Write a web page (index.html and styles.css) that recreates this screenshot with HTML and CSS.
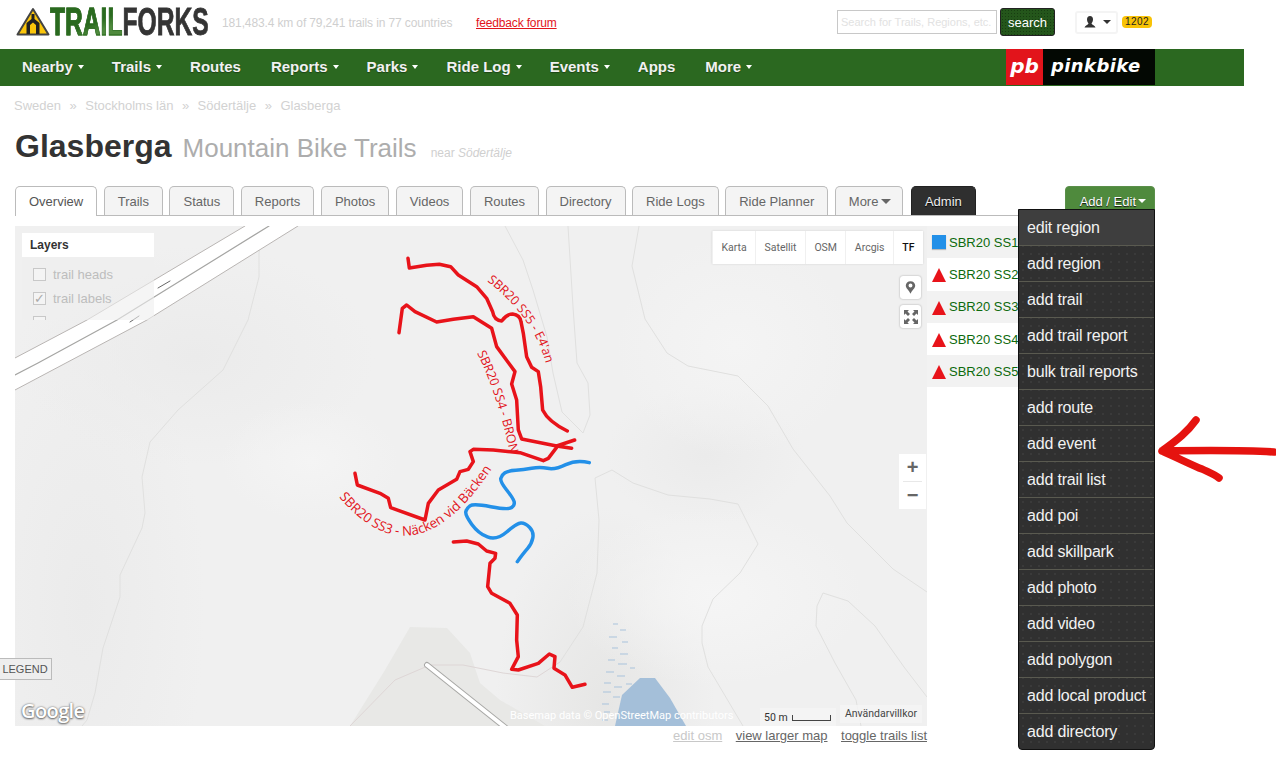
FILE: index.html
```html
<!DOCTYPE html>
<html lang="en">
<head>
<meta charset="utf-8">
<title>Glasberga Mountain Bike Trails</title>
<link rel="stylesheet" href="styles.css">
</head>
<body>
<div class="page">
  <header class="top">
    <a class="logo">
      <svg class="logo-icon" viewBox="0 0 34 30" width="34" height="30">
        <path d="M17 2 L32.500 27.500 H1.500 Z" fill="#fbc60b" stroke="#444" stroke-width="2" stroke-linejoin="round"/>
        <path d="M15.500 7 H18.500 V12 L23.500 16 V27 H20 V18 L17 15.500 L14 18 V27 H10.500 V16 L15.500 12 Z" fill="#222"/>
      </svg>
      <span class="logo-text"><span class="logo-green">TRAIL</span><span class="logo-dark">FORKS</span></span>
    </a>
    <span class="stats">181,483.4 km of 79,241 trails in 77 countries</span>
    <a class="feedback">feedback forum</a>
    <div class="top-right">
      <input class="search-input" placeholder="Search for Trails, Regions, etc.">
      <button class="search-btn">search</button>
      <div class="user">
        <svg viewBox="0 0 14 14" width="14" height="14"><path d="M7 1 C9 1 10 2.500 10 4.500 C10 6.500 9 7.500 8.500 8.500 C9 10 12 10.500 12.500 12.500 H1.500 C2 10.500 5 10 5.500 8.500 C5 7.500 4 6.500 4 4.500 C4 2.500 5 1 7 1 Z" fill="#333"/></svg>
        <span class="caret caret-dark"></span>
      </div>
      <span class="badge">1202</span>
    </div>
  </header>

  <nav class="nav">
    <a class="nav-item">Nearby<span class="caret"></span></a>
    <a class="nav-item">Trails<span class="caret"></span></a>
    <a class="nav-item">Routes</a>
    <a class="nav-item">Reports<span class="caret"></span></a>
    <a class="nav-item">Parks<span class="caret"></span></a>
    <a class="nav-item">Ride Log<span class="caret"></span></a>
    <a class="nav-item">Events<span class="caret"></span></a>
    <a class="nav-item">Apps</a>
    <a class="nav-item">More<span class="caret"></span></a>
    <a class="pinkbike"><span class="pb">pb</span><span class="pb-name">pinkbike</span></a>
  </nav>

  <main class="content">
    <div class="crumbs">
      <a>Sweden</a><span>»</span><a>Stockholms län</a><span>»</span><a>Södertälje</a><span>»</span><a>Glasberga</a>
    </div>
    <h1 class="title"><b>Glasberga</b> <span class="sub">Mountain Bike Trails</span> <small class="near">near <i>Södertälje</i></small></h1>

    <div class="tabs">
      <a class="tab active">Overview</a>
      <a class="tab">Trails</a>
      <a class="tab">Status</a>
      <a class="tab">Reports</a>
      <a class="tab">Photos</a>
      <a class="tab">Videos</a>
      <a class="tab">Routes</a>
      <a class="tab">Directory</a>
      <a class="tab">Ride Logs</a>
      <a class="tab">Ride Planner</a>
      <a class="tab">More<span class="caret caret-grey"></span></a>
      <a class="tab admin">Admin</a>
      <div class="add-edit">
        <a class="add-btn">Add / Edit<span class="caret caret-add"></span></a>
        <ul class="menu">
          <li class="hot">edit region</li>
          <li>add region</li>
          <li>add trail</li>
          <li>add trail report</li>
          <li>bulk trail reports</li>
          <li>add route</li>
          <li>add event</li>
          <li>add trail list</li>
          <li>add poi</li>
          <li>add skillpark</li>
          <li>add photo</li>
          <li>add video</li>
          <li>add polygon</li>
          <li>add local product</li>
          <li>add directory</li>
        </ul>
      </div>
    </div>

    <div class="map-row">
      <div class="map">
        <svg class="map-art" viewBox="15 226 912 500" width="912" height="500">
          <defs>
            <path id="lab5" d="M487 281 Q533 317 545 361"/>
            <path id="lab4" d="M477 353 Q498 395 511 458"/>
            <path id="lab3" d="M339 497 Q414 586 491 470"/>
          </defs>
          <path d="M410 627 L447 628 L470 653 L480 683 L500 700 L545 726 L350 726 L385 670 Z" fill="#e8e8e6"/>
          <path d="M615 726 L622 695 L640 678 L655 678 L670 698 L686 726 Z" fill="#a4bfd9"/>
          <g fill="none" stroke="#e0e0df" stroke-width="1">
            <path d="M262 226 L259 253 L259 277 L248 320 L223 370 L178 410 L150 442 L142 477 L145 513 L142 528 L120 575 L120 597 L103 648 L95 693 L87 720 L82 726"/>
            <path d="M505 226 L523 260 L533 290 L547 337 L553 373 L562 412 L583 433 L590 415 L588 383 L577 363 L573 307 L568 226"/>
            <path d="M639 226 L632 266 L645 319 L667 353 L688 366 L738 376 L768 406 L793 449 L830 496 L847 523 L893 569 L927 592"/>
            <path d="M560 662 L583 627 L597 573 L599 520 L595 478 L612 470 L633 483 L668 495 L710 499 L738 504 L758 544 L740 573 L713 599 L702 626 L702 643 L708 667 L743 726"/>
            <path d="M861 726 L856 700 L835 663 L816 626 L817 606 L823 593 L848 601 L875 626 L904 667 L927 697"/>
            <path d="M350 726 L395 680 L430 665 L463 665 L503 673 L537 677 L560 662" stroke="#ded6d6"/>
          </g>
          <g fill="none" stroke="#a9c3dc" stroke-width="1">
            <path d="M613 624 h5 M620 630 h6 M609 637 h8 M622 642 h6 M612 648 h6 M620 654 h8 M608 660 h7 M618 664 h9 M630 668 h5 M606 672 h8 M617 676 h8 M604 683 h7 M614 687 h8 M626 684 h6 M603 692 h8 M613 697 h7 M602 704 h7 M604 712 h6 M602 720 h6"/>
          </g>
          <path d="M15 358 L87 320 L245 226 L298 226 L147 320 L15 390 Z" fill="#fff"/>
          <g fill="none" stroke-linecap="round">
            <path d="M15 358 L87 320 L245 226 M298 226 L147 320 L15 390" stroke="#b9b5b3" stroke-width="1"/>
            <path d="M15 375 L38 363 L117 320 L269 226" stroke="#a5a5a3" stroke-width="1.200"/>
            <path d="M158 288 L170 281 M130 322 L139 316" stroke="#666" stroke-width="1"/>
            <path d="M427 665 L506 728" stroke="#a8a8a6" stroke-width="6"/>
            <path d="M427 665 L506 728" stroke="#fff" stroke-width="4"/>
          </g>
          <g fill="none" stroke="#e8131a" stroke-linejoin="round" stroke-linecap="round">
            <g transform="translate(320 240) scale(.3333)" stroke-width="10.500">
              <path d="M264 55 L268 84 L320 76 L358 73 L392 80 L415 105 L470 140 L500 175 L518 215 Q522 240 545 243 Q560 222 578 222 Q600 225 603 245 L610 280 L620 350 L635 382 L655 395 L662 440 L668 510 Q685 545 742 573"/>
              <path d="M237 278 L247 205 L260 195 L285 215 L350 246 L400 238 L460 230 L515 265 L530 320 L585 395 L575 432 L590 480 L595 570 L605 597 L710 618 L764 600 M710 618 L755 625"/>
            </g>
            <g transform="translate(320 440) scale(.3333)" stroke-width="10.500">
              <path d="M105 100 L112 135 L180 160 L205 175 L212 203 L315 240 L325 190 L355 150 L410 118 L420 95 L445 88 L460 65 L450 35 L460 28 L520 30 L600 38 L670 62 L685 55 L710 22"/>
              <path d="M400 306 L440 303 L475 312 L500 333 L527 340 L525 355 L510 370 L503 440 L515 460 L570 490 L592 525 L590 600 L595 650 L575 688 L595 690 L655 670 L688 642 L705 650 L702 685 L735 705 L757 742 L795 733"/>
              <path d="M808 68 Q770 58 737.500 74 Q705 90 682.500 85 Q660 80 635 85 Q610 90 587.500 91 Q565 92 555 98.500 Q545 105 542.500 115 Q540 125 560 150 Q580 175 582.500 185 Q585 195 575 202.500 Q565 210 512.500 200 Q460 190 450 197.500 Q440 205 437.500 215 Q435 225 455 252.500 Q475 280 502.500 291 Q530 302 560 276 Q590 250 602.500 249 Q615 248 628.500 261.500 Q642 275 638.500 293.500 Q635 312 622.500 326 Q610 340 592 365" stroke="#2390e8"/>
            </g>
          </g>
          <g class="map-label">
            <text><textPath href="#lab5">SBR20 SS5 - E4'an</textPath></text>
            <text><textPath href="#lab4">SBR20 SS4 - BRON</textPath></text>
            <text class="map-label-big"><textPath href="#lab3">SBR20 SS3 - Näcken vid Bäcken</textPath></text>
          </g>
        </svg>

        <div class="layers">
          <div class="layers-title">Layers</div>
          <div class="layers-body">
            <label class="layer"><span class="box"></span>trail heads</label>
            <label class="layer"><span class="box">✓</span>trail labels</label>
            <span class="layer"><span class="box"></span></span>
          </div>
        </div>

        <div class="maptypes">
          <span>Karta</span><span>Satellit</span><span>OSM</span><span>Arcgis</span><span class="on">TF</span>
        </div>

        <div class="ctl ctl-pin">
          <svg viewBox="0 0 14 18" width="11" height="15"><path fill-rule="evenodd" d="M7 1 C10.500 1 13 3.500 13 6.500 C13 10 9 12.500 7 17 C5 12.500 1 10 1 6.500 C1 3.500 3.500 1 7 1 Z M7 4 A2.500 2.500 0 1 0 7 9 A2.500 2.500 0 1 0 7 4 Z" fill="#666"/></svg>
        </div>
        <div class="ctl ctl-full">
          <svg viewBox="0 0 16 16" width="16" height="16"><path d="M1 1 H6 L4.500 2.500 L7 5 L5 7 L2.500 4.500 L1 6 Z M15 1 V6 L13.500 4.500 L11 7 L9 5 L11.500 2.500 L10 1 Z M1 15 V10 L2.500 11.500 L5 9 L7 11 L4.500 13.500 L6 15 Z M15 15 H10 L11.500 13.500 L9 11 L11 9 L13.500 11.500 L15 10 Z" fill="#666"/></svg>
        </div>
        <div class="zoom-ctl"><span>+</span><span>−</span></div>

        <div class="google">Google</div>
        <div class="basemap">Basemap data © OpenStreetMap contributors</div>
        <div class="scale"><span class="scale-text">50 m</span><span class="scale-bar"></span></div>
        <div class="terms">Användarvillkor</div>
      </div>

      <ul class="trail-list">
        <li><span class="sq"></span>SBR20 SS1</li>
        <li><span class="tri"></span>SBR20 SS2</li>
        <li><span class="tri"></span>SBR20 SS3</li>
        <li><span class="tri"></span>SBR20 SS4</li>
        <li><span class="tri"></span>SBR20 SS5</li>
      </ul>
    </div>

    <div class="map-links">
      <a class="faint">edit osm</a>
      <a>view larger map</a>
      <a>toggle trails list</a>
    </div>
  </main>

  <a class="legend">LEGEND</a>

  <svg class="arrow" viewBox="0 0 120 66" width="120" height="66">
    <path d="M116 36 C100 35 70 34 4 35 C16 26 28 18 38 4 M4 35 C20 42 36 50 44 53 C50 56 56 58 61 62" fill="none" stroke="#e5130f" stroke-width="7.500" stroke-linecap="round" stroke-linejoin="round"/>
  </svg>
</div>
</body>
</html>
```
FILE: styles.css
```css
* { box-sizing: border-box; }
html, body { margin: 0; padding: 0; background: #fff; }
body { font-family: "Liberation Sans", Arial, sans-serif; color: #333; overflow: hidden; }
ul { list-style: none; margin: 0; padding: 0; }
.page { position: relative; width: 1276px; height: 763px; overflow: hidden; }

.top { height: 49px; width: 1244px; display: flex; align-items: center; padding-left: 16px; font-size: 12px; }
.logo { display: flex; align-items: center; width: 206px; margin-bottom: 5px; }
.logo-icon { flex: none; margin-right: 0; }
.logo-text { display: inline-block; font-weight: bold; font-size: 38px; line-height: 30px; letter-spacing: 0; transform: scaleX(.648); transform-origin: left center; white-space: nowrap; -webkit-text-stroke: .8px currentColor; }
.logo-green { background: linear-gradient(165deg, #2a6a1f 55%, #4f8a3d 70%); -webkit-background-clip: text; background-clip: text; color: transparent; -webkit-text-stroke: .8px #2a6a1f; }
.logo-dark { color: #343434; }
.stats { color: #cfcfcf; width: 254px; margin-bottom: 4px; letter-spacing: -.13px; white-space: nowrap; }
.feedback { color: #e2141b; text-decoration: underline; margin-bottom: 4px; letter-spacing: -.15px; white-space: nowrap; }
.top-right { margin-left: auto; display: flex; align-items: center; width: 315px; margin-right: 92px; margin-bottom: 5px; }
.search-input { width: 160px; height: 24px; border: 1px solid #c8c8c8; padding: 0 3px; font: 11px "Liberation Sans", Arial, sans-serif; margin-left: 0; }
.search-input::placeholder { color: #e2e2e2; opacity: 1; }
.search-btn { width: 55px; height: 28px; margin-left: 3px; border: 1px solid #222; border-radius: 3px; color: #fff; font: 13px "Liberation Sans", Arial, sans-serif; background: #24561b radial-gradient(#173d11 1px, transparent 1px) 0 0 / 3px 3px; padding: 0; }
.user { width: 43px; height: 23px; margin-left: 20px; border: 2px solid #f4f4f4; border-radius: 3px; display: flex; align-items: center; justify-content: center; gap: 6px; }
.badge { margin-left: 4px; width: 30px; height: 12px; border-radius: 4px; background: #f9c306; color: #222; font-size: 10px; line-height: 12px; text-align: center; letter-spacing: .4px; }

.nav { position: relative; height: 37px; width: 1244px; background: #2b6820; display: flex; align-items: center; padding: 0 0 2px 7px; }
.nav-item { color: #f1f1f1; font-weight: bold; font-size: 15px; padding: 0 15px; white-space: nowrap; text-shadow: 0 1px 1px rgba(0,0,0,.35); }
.caret { display: inline-block; width: 0; height: 0; margin-left: 5px; margin-right: -2px; vertical-align: 3px; border-left: 3.500px solid transparent; border-right: 3.500px solid transparent; border-top: 4px solid #fff; }
.caret-dark { border-top-color: #333; margin: 0; border-left-width: 4px; border-right-width: 4px; }
.caret-grey { border-top-color: #666; border-left-width: 5px; border-right-width: 5px; border-top-width: 5px; margin-left: 3px; vertical-align: 2px; }
.caret-add { border-left-width: 4.500px; border-right-width: 4.500px; margin-left: 2px; margin-right: 0; }
.pinkbike { position: absolute; left: 1006px; top: 0; height: 36px; width: 149px; display: flex; background: #030803; color: #fff; font-family: "DejaVu Sans", sans-serif; font-weight: bold; font-style: italic; }
.pb { width: 37px; background: #e2141b; font-size: 20px; line-height: 34px; text-align: center; }
.pb-name { flex: 1; font-size: 18px; line-height: 34px; padding-left: 8px; letter-spacing: .4px; }

.content { padding-left: 15px; width: 1155px; }
.crumbs { height: 39px; display: flex; align-items: center; gap: 8.500px; font-size: 13px; color: #d2d2d2; margin-left: -1px; }
.title { margin: -2px 0 0; height: 47px; display: flex; align-items: baseline; font-weight: normal; line-height: 47px; white-space: nowrap; }
.title b { font-size: 32px; color: #333; font-weight: bold; }
.sub { font-size: 26px; color: #adadad; margin-left: 11px; }
.near { font-size: 12px; color: #cfcfcf; margin-left: 14px; }

.tabs { margin-top: 16px; height: 30px; display: flex; gap: 6.500px; border-bottom: 1px solid #bbb; width: 1140px; position: relative; }
.tab { height: 29px; padding: 0 13px; border: 1px solid #bbb; border-bottom: 0; border-radius: 5px 5px 0 0; background: #f4f4f4; color: #666; font-size: 13px; line-height: 29px; white-space: nowrap; }
.tab.active { background: #fff; height: 30px; position: relative; color: #555; }
.tab.admin { background: #2f2f2f; color: #eee; border-color: #222; margin-left: 1px; text-shadow: 0 1px 1px #000; }
.add-edit { position: absolute; right: 0; top: 0; width: 90px; }
.add-btn { display: block; height: 24px; background: #4f8a3d; border-radius: 4px 4px 0 0; border: 1px solid #5a8f4a; color: #fff; font-size: 13px; line-height: 29px; text-align: right; padding-right: 8px; text-shadow: 0 1px 1px #111; white-space: nowrap; }
.menu { position: absolute; right: 0; top: 23px; width: 137px; background: #303030 radial-gradient(#3a3a3a 1px, transparent 1px) 0 0 / 8px 8px; border: 1px solid #111; border-radius: 0 0 4px 4px; z-index: 5; }
.menu li { height: 36px; line-height: 35px; padding-left: 8px; color: #f2f2f2; font-size: 16px; letter-spacing: -.18px; border-bottom: 1px solid #5a5a50; white-space: nowrap; }
.menu li:last-child { border-bottom: 0; height: 35px; }
.menu li.hot { background: #3e3e3e; }

.map-row { margin-top: 10px; display: flex; height: 500px; }
.map { position: relative; width: 912px; height: 500px; overflow: hidden; flex: none;
  background:
    radial-gradient(ellipse 90px 60px at 295px 235px, #f4f4f4, transparent),
    radial-gradient(ellipse 150px 90px at 700px 370px, #f5f5f5, transparent),
    radial-gradient(ellipse 120px 110px at 720px 120px, #f4f4f4, transparent),
    radial-gradient(ellipse 100px 70px at 690px 230px, #ebebeb, transparent),
    radial-gradient(ellipse 180px 110px at 180px 130px, #ebebeb, transparent),
    radial-gradient(ellipse 120px 300px at 70px 380px, #ebebeb, transparent),
    radial-gradient(ellipse 110px 200px at 590px 480px, #e6e6e5, transparent),
    #f0f0f0; }
.map-art { position: absolute; left: 0; top: 0; display: block; }
.map-label { font-family: "Open Sans", sans-serif; font-size: 12.500px; fill: #e2141b; }
.map-label-big { font-size: 13.300px; }

.layers { position: absolute; left: 7px; top: 7px; width: 132px; }
.layers-title { height: 24px; background: #fff; font-size: 12px; font-weight: bold; line-height: 24px; padding-left: 8px; color: #333; }
.layers-body { height: 63px; background: rgba(238,238,238,.6); border-radius: 0 0 3px 3px; overflow: hidden; padding: 5px 0 0 11px; }
.layer { display: flex; align-items: center; height: 24px; font-size: 13px; color: #bdbdbd; }
.box { width: 13px; height: 13px; border: 1px solid #c8c8c8; margin-right: 7px; font-size: 13px; line-height: 11px; color: #aaa; text-align: center; background: #f4f4f4; }

.maptypes { position: absolute; left: 697px; top: 5px; height: 33px; width: 211px; display: flex; background: #fff; box-shadow: 0 0 2px rgba(0,0,0,.12); font-family: Roboto, sans-serif; font-size: 10.500px; color: #666; }
.maptypes span { display: flex; align-items: center; justify-content: center; border-left: 1px solid #f0f0f0; padding: 0 8px; flex: auto; }
.maptypes .on { color: #111; font-weight: 500; }
.ctl { position: absolute; left: 885px; width: 21px; height: 23px; background: #fff; border-radius: 3px; box-shadow: 0 0 2px rgba(0,0,0,.35); display: flex; align-items: center; justify-content: center; }
.ctl-pin { top: 50px; }
.ctl-full { top: 79px; }
.zoom-ctl { position: absolute; left: 884px; top: 228px; width: 27px; height: 55px; background: #fff; display: flex; flex-direction: column; font: bold 20px "Liberation Sans", sans-serif; color: #666; }
.zoom-ctl span { flex: 1; display: flex; align-items: center; justify-content: center; }
.zoom-ctl span:first-child { border-bottom: 1px solid #e8e8e8; margin: 0 4px; }

.google { position: absolute; left: 6px; bottom: 2px; font-family: "Open Sans", sans-serif; font-size: 20px; letter-spacing: -.6px; font-weight: 600; color: #fff; text-shadow: 0 0 2px #666, 0 1px 2px #666; }
.basemap { position: absolute; left: 495px; bottom: 4px; font-family: Roboto, sans-serif; font-size: 11px; color: #fff; white-space: nowrap; }
.scale { position: absolute; left: 745px; bottom: 0; width: 76px; height: 18px; background: rgba(245,245,245,.7); display: flex; align-items: center; gap: 4px; font-family: Roboto, sans-serif; font-size: 10.500px; color: #333; padding-left: 4px; }
.scale-text { white-space: nowrap; flex: none; }
.scale-bar { flex: none; width: 39px; height: 6px; border: 1px solid #444; border-top: 0; margin-top: 1px; }
.terms { position: absolute; left: 825px; bottom: 3px; height: 18px; width: 82px; background: rgba(245,245,245,.8); font-family: Roboto, sans-serif; font-size: 10.500px; color: #444; line-height: 17px; text-align: center; }

.trail-list { width: 228px; flex: none; }
.trail-list li { height: 32.300px; display: flex; align-items: center; font-size: 13px; color: #0d6a0d; white-space: nowrap; padding-left: 5px; background: #fff; }
.trail-list li:nth-child(odd) { background: #f2f2f2; }
.sq { width: 14px; height: 14px; background: #2390e8; margin-right: 3px; margin-top: -1px; box-shadow: 0 1px 1px #bbb; }
.tri { width: 0; height: 0; border-left: 7px solid transparent; border-right: 7px solid transparent; border-bottom: 14px solid #e8131a; margin-right: 3px; margin-top: 2px; }

.map-links { width: 912px; display: flex; justify-content: flex-end; gap: 13.500px; margin-top: 2px; font-size: 13px; line-height: 15px; color: #666; }
.map-links a { text-decoration: underline; white-space: nowrap; }
.map-links .faint { color: #c8c8c8; }

.legend { position: absolute; left: -2px; top: 658px; width: 54px; height: 22px; background: #eee; border: 1px solid #bbb; font-size: 11px; line-height: 20px; text-align: center; color: #555; }
.arrow { position: absolute; left: 1158px; top: 416px; }
```
